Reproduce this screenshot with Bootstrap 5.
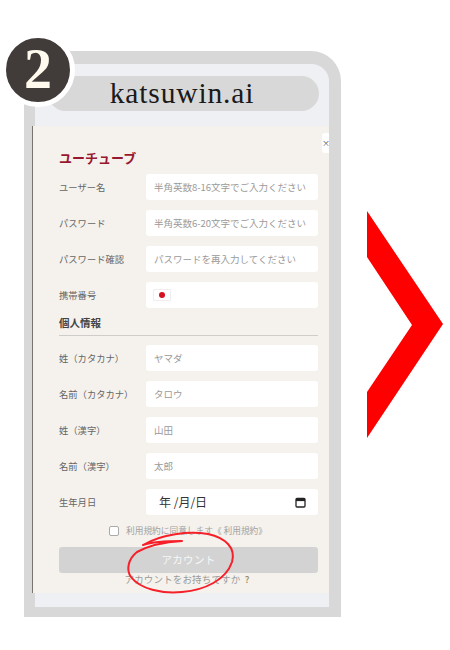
<!DOCTYPE html>
<html lang="ja">
<head>
<meta charset="utf-8">
<title>katsuwin.ai</title>
<link rel="stylesheet" href="https://cdn.jsdelivr.net/npm/bootstrap@5.3.0/dist/css/bootstrap.min.css">
<style>
html,body{height:100%;background:#fff;overflow:hidden}
body{font-family:"Noto Sans CJK JP","Liberation Sans",sans-serif;color:#555}
.stage{width:450px;height:650px;padding:51px 0 0 24px;position:relative}
.phone{width:317px;height:566px;border:solid #d8d8d8;border-width:13px 12px 10px 11px;border-radius:30px 30px 0 0;background:#eff0f4;position:relative}
.phone-inner{height:100%;display:flex;flex-direction:column}
.urlpill{height:35px;margin:12px 10px 15px 13px;border-radius:18px;background:#d8d8d8;font-family:"Liberation Serif",serif;font-size:29.5px;line-height:35px;color:#1a1a1a;text-align:center;letter-spacing:.85px;padding-right:3px}
.formpane{width:297px;height:467px;margin-left:-3px;background:#f5f2ed;border-left:1px solid #77736f;padding:23px 11px 0 26px;position:relative}
.formtitle{font-size:13px;font-weight:700;color:#97182f;line-height:18px;margin-bottom:7px}
.frow{height:26px;margin-bottom:10px;gap:0}
.flabel{width:87px;flex:none;font-size:9.3px;color:#666;margin:0;white-space:nowrap;line-height:26px}
.form-control.fieldbox{flex:1;height:26px;min-height:26px;border:0;border-radius:3px;background:#fff;font-size:9.5px;padding:0 8px;color:#555;box-shadow:none}
.fieldbox::placeholder{color:#9a9a9a;opacity:1}
.flagbox{display:flex;align-items:center}
.flagmark{width:18px;height:12px;background:#fff;border:1px solid #eee;border-radius:1px;display:flex;align-items:center;justify-content:center;margin-left:-1px}
.flagdot{width:6px;height:6px;border-radius:50%;background:#d5121f}
.datebox{display:flex;align-items:center;justify-content:space-between;font-size:12px!important;color:#333!important;padding:0 12px 0 13px!important}
.sect{font-size:10.5px;font-weight:700;color:#444;line-height:16px;margin-top:-3px;padding-bottom:4px;border-bottom:1px solid #cfcdc9;margin-bottom:9px}
.agree{gap:7px;font-size:8.7px;color:#a0a0a0;height:14px;margin-top:-1px;margin-bottom:9px;padding-right:1px}
.agreebox{width:10px;height:10px;border:1px solid #aaa;border-radius:2px;background:#fff;flex:none}
.btn.signbtn{width:100%;height:26px;padding:0;border:0;border-radius:3px;background:#d3d3d3;color:#f7f7f7;font-size:10.5px;line-height:26px;letter-spacing:.3px;display:block;opacity:1}
.haveacct{font-size:9.5px;color:#9a9a9a;text-align:center;line-height:13px;margin-top:0;letter-spacing:.15px;padding-right:3px}
.haveacct b{color:#a08a5a;font-weight:500;margin-left:2px}
.numbadge{position:absolute;left:1px;top:33px;width:74px;height:74px;border-radius:50%;background:#413b39;border:5px solid #fff;box-sizing:border-box;color:#fff9ee;font-family:"Liberation Serif",serif;font-weight:700;font-size:56px;line-height:62px;text-align:center}
.closetab{position:absolute;right:0;top:7px;width:7px;height:20px;background:#fff;border-radius:3px 0 0 3px;font-size:8px;line-height:20px;color:#555;overflow:hidden;text-align:right}
.chev{position:absolute;left:367px;top:211px}
.scribble{position:absolute;left:120px;top:525px;pointer-events:none}
</style>
</head>
<body>
<div class="stage">
  <div class="phone">
    <div class="phone-inner">
      <div class="urlpill">katsuwin.ai</div>
      <form class="formpane">
        <div class="closetab">×</div>
        <div class="formtitle">ユーチューブ</div>
        <div class="d-flex align-items-center frow"><label class="flabel">ユーザー名</label><input class="form-control fieldbox" placeholder="半角英数8-16文字でご入力ください"></div>
        <div class="d-flex align-items-center frow"><label class="flabel">パスワード</label><input class="form-control fieldbox" placeholder="半角英数6-20文字でご入力ください"></div>
        <div class="d-flex align-items-center frow"><label class="flabel">パスワード確認</label><input class="form-control fieldbox" placeholder="パスワードを再入力してください"></div>
        <div class="d-flex align-items-center frow"><label class="flabel">携帯番号</label><div class="form-control fieldbox flagbox"><span class="flagmark"><span class="flagdot"></span></span></div></div>
        <div class="sect">個人情報</div>
        <div class="d-flex align-items-center frow"><label class="flabel">姓（カタカナ）</label><input class="form-control fieldbox" placeholder="ヤマダ"></div>
        <div class="d-flex align-items-center frow"><label class="flabel">名前（カタカナ）</label><input class="form-control fieldbox" placeholder="タロウ"></div>
        <div class="d-flex align-items-center frow"><label class="flabel">姓（漢字）</label><input class="form-control fieldbox" placeholder="山田"></div>
        <div class="d-flex align-items-center frow"><label class="flabel">名前（漢字）</label><input class="form-control fieldbox" placeholder="太郎"></div>
        <div class="d-flex align-items-center frow"><label class="flabel">生年月日</label><div class="form-control fieldbox datebox"><span>年 /月/日</span><svg width="11" height="11" viewBox="0 0 11 11"><rect x="1" y="1.5" width="9" height="8.5" rx="1" fill="none" stroke="#222" stroke-width="1.3"/><rect x="1" y="1.5" width="9" height="2.6" fill="#222"/></svg></div></div>
        <div class="d-flex align-items-center justify-content-center agree"><span class="agreebox"></span><span>利用規約に同意します《 利用規約》</span></div>
        <button type="button" class="btn signbtn">アカウント</button>
        <div class="haveacct">アカウントをお持ちですか <b>?</b></div>
      </form>
    </div>
  </div>
  <div class="numbadge">2</div>
  <svg class="chev" width="76" height="228" viewBox="0 0 76 228"><polygon points="0,0 76,113 0,227 0,181 45,114 0,46" fill="#ff0000"/></svg>
  <svg class="scribble" width="120" height="72" viewBox="120 525 120 72"><path d="M143 545C152 542 166 541 182 541C165 542 148 546 137 552C128 559 126 570 131 577C140 589 162 594 182 592C205 590 226 580 232 562C236 548 226 538 208 534C188 531 162 534 143 545" fill="none" stroke="#f5202a" stroke-width="2" stroke-linecap="round" stroke-linejoin="round"/></svg>
</div>
</body>
</html>
